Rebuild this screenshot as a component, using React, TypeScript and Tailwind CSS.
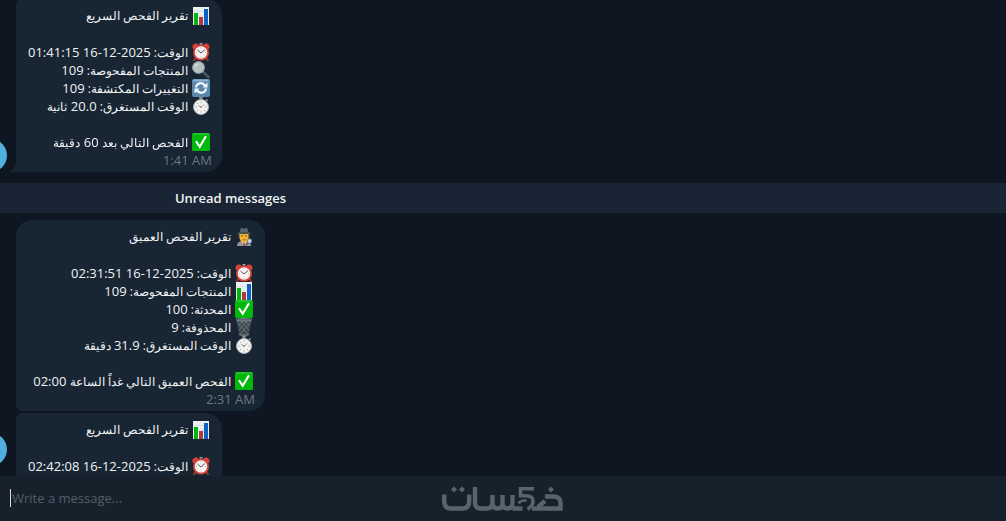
import type { ReactNode } from 'react';

type IconName = 'chart' | 'alarm' | 'search' | 'refresh' | 'stopwatch' | 'check' | 'trash' | 'detective';

type Line = { icon: IconName; text: string } | null;

const quickReport: Line[] = [
  { icon: 'chart', text: 'تقرير الفحص السريع' },
  null,
  { icon: 'alarm', text: 'الوقت: 2025-12-16 01:41:15' },
  { icon: 'search', text: 'المنتجات المفحوصة: 109' },
  { icon: 'refresh', text: 'التغييرات المكتشفة: 109' },
  { icon: 'stopwatch', text: 'الوقت المستغرق: 20.0 ثانية' },
  null,
  { icon: 'check', text: 'الفحص التالي بعد 60 دقيقة' },
];

const deepReport: Line[] = [
  { icon: 'detective', text: 'تقرير الفحص العميق' },
  null,
  { icon: 'alarm', text: 'الوقت: 2025-12-16 02:31:51' },
  { icon: 'chart', text: 'المنتجات المفحوصة: 109' },
  { icon: 'check', text: 'المحدثة: 100' },
  { icon: 'trash', text: 'المحذوفة: 9' },
  { icon: 'stopwatch', text: 'الوقت المستغرق: 31.9 دقيقة' },
  null,
  { icon: 'check', text: 'الفحص العميق التالي غداً الساعة 02:00' },
];

const latestReport: Line[] = [
  { icon: 'chart', text: 'تقرير الفحص السريع' },
  null,
  { icon: 'alarm', text: 'الوقت: 2025-12-16 02:42:08' },
];

const icons: Record<IconName, ReactNode> = {
  chart: (
    <>
      <rect x="1" y="0" width="16" height="18" fill="#eceff1" />
      <path d="M1 4.5h16M1 9h16M1 13.5h16" stroke="#cfd8dc" strokeWidth="0.6" />
      <rect x="2" y="6" width="4" height="12" fill="#00b50c" />
      <rect x="7" y="10" width="4" height="8" fill="#b03a3f" />
      <rect x="12" y="2" width="4" height="16" fill="#0c62c4" />
    </>
  ),
  alarm: (
    <>
      <path d="M3.5 15 2 17.5M14.5 15l1.5 2.5" stroke="#a5312c" strokeWidth="1.8" strokeLinecap="round" />
      <path d="M0.5 5C0 2 2.5 0 5.5 0.8L6.5 2 2 6.5zM17.5 5C18 2 15.5 0 12.5 0.8L11.5 2 16 6.5z" fill="#d84339" />
      <path d="M9 3V0.5M7.5 0.7h3" stroke="#90a4ae" strokeWidth="1.2" />
      <circle cx="9" cy="9.5" r="8" fill="#d5433a" />
      <circle cx="9" cy="9.5" r="6.2" fill="#f7f2ef" />
      <path d="m5.5 7 3.5 3L13 6.5" fill="none" stroke="#515a60" strokeWidth="1" />
      <path d="M9 4.5v1M9 13.5v1M4 9.5h1M13 9.5h1" stroke="#9c9c9c" strokeWidth="0.7" />
    </>
  ),
  search: (
    <>
      <path d="m10.5 10.5 2.5 2" stroke="#8c979c" strokeWidth="1.8" />
      <path d="m12.5 12.3 4 3.7" stroke="#46545c" strokeWidth="3" strokeLinecap="round" />
      <circle cx="6.5" cy="6.5" r="6" fill="#b7bfc3" stroke="#88949a" strokeWidth="1" />
      <path d="M3 6a4 4 0 0 1 3.5-3" fill="none" stroke="#dfe5e7" strokeWidth="1.2" />
    </>
  ),
  refresh: (
    <>
      <rect x="0" y="0" width="18" height="18" rx="2" fill="#5886ad" />
      <rect x="0.8" y="0.6" width="16" height="2" rx="1" fill="#8bb1cd" />
      <path d="M4 8.5c.5-5 6.500-5.500 9-2M14 9.500c-.5 5-6.500 5.500-9 2" fill="none" stroke="#f5f8fa" strokeWidth="2.2" />
      <path d="M15.5 3.5v5h-5zM2.5 14.5v-5h5z" fill="#f5f8fa" />
    </>
  ),
  stopwatch: (
    <>
      <path d="M9 3V0M7 0.5h4M14 4l1.5-1.5" stroke="#7d898f" strokeWidth="1.8" />
      <circle cx="9" cy="10" r="7.5" fill="#f2f2f0" stroke="#a8afb2" strokeWidth="1" />
      <path d="M9 4.5v1.3M9 14.2v1.3M3.5 10h1.3M13.2 10h1.3M5 6l1 1M5 14l1-1M13 14l-1-1" stroke="#8b8b8b" strokeWidth="0.8" />
      <path d="M9 10 6 8.5" stroke="#7d868a" strokeWidth="0.8" />
      <path d="m9 10 3.5-2.5" stroke="#d88a84" strokeWidth="0.8" />
      <circle cx="9" cy="10" r="0.8" fill="#666f74" />
    </>
  ),
  check: (
    <>
      <rect x="0" y="0" width="18" height="18" rx="1.5" fill="#00b80c" />
      <path d="M1 1h16" stroke="#54d45c" strokeWidth="0.8" />
      <path d="m4.5 9 3.2 4.8L13.5 4" fill="none" stroke="#fff" strokeWidth="2.2" strokeLinecap="round" />
    </>
  ),
  trash: (
    <>
      <path d="M1.5 1h15L14 16.5c-2 1-8 1-10 0z" fill="#3c484f" />
      <path d="m2 4 11 12M4 1l10 11M8 1l7 7M12 1l4 4M16 4 5 16M14 1 4 12M10 1 3 8M6 1 2 5" stroke="#77838a" strokeWidth="0.7" />
      <ellipse cx="9" cy="1.8" rx="8" ry="1.3" fill="#566269" stroke="#87939a" strokeWidth="0.8" />
      <path d="M4 16.5c2 1 8 1 10 0" fill="none" stroke="#929da2" strokeWidth="1" />
    </>
  ),
  detective: (
    <>
      <path d="M2 18c0-3 2-4.5 5-5h4c3 .5 5 2 5 5z" fill="#929da2" />
      <path d="m6 13 3 4 3-4z" fill="#f4f4f4" />
      <path d="M8.3 14h1.4L10 18H8z" fill="#cc433c" />
      <path d="M3.500 5h11v5h-11z" fill="#513c35" />
      <path d="M4.5 5h9v4c0 3.5-2 5.5-4.5 5.5S4.5 12.5 4.5 9z" fill="#f3b52f" />
      <path d="M6.3 8h1.4M10.3 8h1.4" stroke="#493b30" strokeWidth="1.2" />
      <path d="M7.5 11.5q1.5 1 3 0" fill="none" stroke="#a63f2c" strokeWidth="0.8" />
      <path d="M5 4.5c0-4 1-5 2.5-4.2L9 .8l1.5-.5C12-.5 13 .5 13 4.5z" fill="#59666d" />
      <ellipse cx="9" cy="5" rx="7" ry="1.2" fill="#46535a" />
      <circle cx="14.5" cy="13" r="2.3" fill="#c6d4da" stroke="#69767c" strokeWidth="0.8" />
      <path d="m13 15-2 2.5" stroke="#46535a" strokeWidth="1.2" />
    </>
  ),
};

function Emoji({ name }: { name: IconName }) {
  return (
    <svg viewBox="0 0 18 18" className="w-[18px] h-[18px] shrink-0" aria-hidden="true">
      {icons[name]}
    </svg>
  );
}

// Arabic words run a size smaller than the digits beside them
function ReportText({ text }: { text: string }) {
  return (
    <span className="text-xs leading-[18px]">
      {text.split(/(\d[\d\-:. ]*)/).map((part, index) =>
        /^\d/.test(part) ? (
          <span key={index} className="text-[13px]">{part}</span>
        ) : (
          part
        )
      )}
    </span>
  );
}

function Bubble({ lines, time, className = '' }: { lines: Line[]; time?: string; className?: string }) {
  return (
    <div className={`bg-[#182533] pt-2 pb-[3px] whitespace-nowrap ${className}`}>
      <div dir="rtl" className="px-3">
        {lines.map((line, index) => (
          <div key={index} className="flex items-center gap-1 h-[18px]">
            {line && (
              <>
                <Emoji name={line.icon} />
                <ReportText text={line.text} />
              </>
            )}
          </div>
        ))}
      </div>
      {time && <div className="px-2.5 text-right text-[#6d7883]">{time}</div>}
    </div>
  );
}

function Avatar() {
  return <div className="sticky bottom-2.5 size-[33px] -ml-[26px] mr-[9px] shrink-0 self-end rounded-full bg-[#4fb0dd]" />;
}

function Logo() {
  return (
    <svg viewBox="0 0 122 27" className="w-[122px] h-[27px]" fill="none" stroke="#59636c" strokeWidth="4.4" role="img" aria-label="خمسات">
      <path d="M2.2 9.5V16c0 5 2 7.5 7 7.5h11c5 0 7-2.5 7-7.5V9.5" />
      <path d="M33 2v15c0 4.5 2 6.5 6 6.5h5.5c4 0 6-2 6-6V10M50.5 17c0 4.5 2 6.5 5 6.5s5-2 5-6V10M60.5 17c0 4.5 2 6.5 5 6.5s5-2 5-6V10M70.5 23.5h10" />
      <path d="M92 3.800H78.500v7h5c5 0 7.500 2 7.500 5.500 0 3-1.500 5.500-5.500 8" strokeWidth="3.600" />
      <path d="M76.500 18.500c1.500-2.500 4-3.500 8-2.800" strokeWidth="2.600" />
      <path d="M90 23.500h28.500V18c0-4.500-3-6.500-7.500-6.500h-8M96 22l7-6" />
      <path d="m12 1.500 3 3-3 3-3-3zM20 1.500l3 3-3 3-3-3zM109 1.500l3 3-3 3-3-3z" fill="#59636c" stroke="none" />
    </svg>
  );
}

export default function App() {
  return (
    <div className="flex flex-col h-screen bg-[#0e1621] text-[#f0f3f5] text-[13px] leading-[18px] font-['Open_Sans','Noto_Sans',sans-serif]">
      <main className="flex-1 min-h-0 overflow-hidden">
        {/* Quick report */}
        <div className="flex -mt-px">
          <Avatar />
          <div className="relative">
            <Bubble lines={quickReport} time="1:41 AM" className="rounded-tl-md rounded-r-2xl" />
            <svg viewBox="0 0 6 10" className="absolute right-full bottom-0 w-1.5 h-2.5" fill="#182533" aria-hidden="true">
              <path d="M6 0v10H1C-.5 10 0 9 1 8.5 4 7 6 4 6 0z" />
            </svg>
          </div>
        </div>

        {/* Unread divider */}
        <div className="mt-[11px] mb-[7px] bg-[#192534] py-1.5">
          <h2 className="max-w-[461px] text-center font-semibold">Unread messages</h2>
        </div>

        {/* Deep report */}
        <div className="flex pl-4">
          <Bubble lines={deepReport} time="2:31 AM" className="min-w-[249px] rounded-t-2xl rounded-br-2xl rounded-bl-md" />
        </div>

        {/* Latest quick report */}
        <div className="flex mt-0.5">
          <Avatar />
          <Bubble lines={latestReport} className="rounded-tl-md rounded-tr-2xl" />
        </div>
      </main>

      <footer className="grid grid-cols-[1fr_auto_1fr] items-center h-[45px] bg-[#17212b]">
        <input
          type="text"
          aria-label="Write a message"
          placeholder="Write a message..."
          className="mx-2.5 mb-0.5 h-[18px] border-l border-[#e6d5cf] bg-transparent pl-px outline-none placeholder:text-[#535e68]"
        />
        <Logo />
      </footer>
    </div>
  );
}
